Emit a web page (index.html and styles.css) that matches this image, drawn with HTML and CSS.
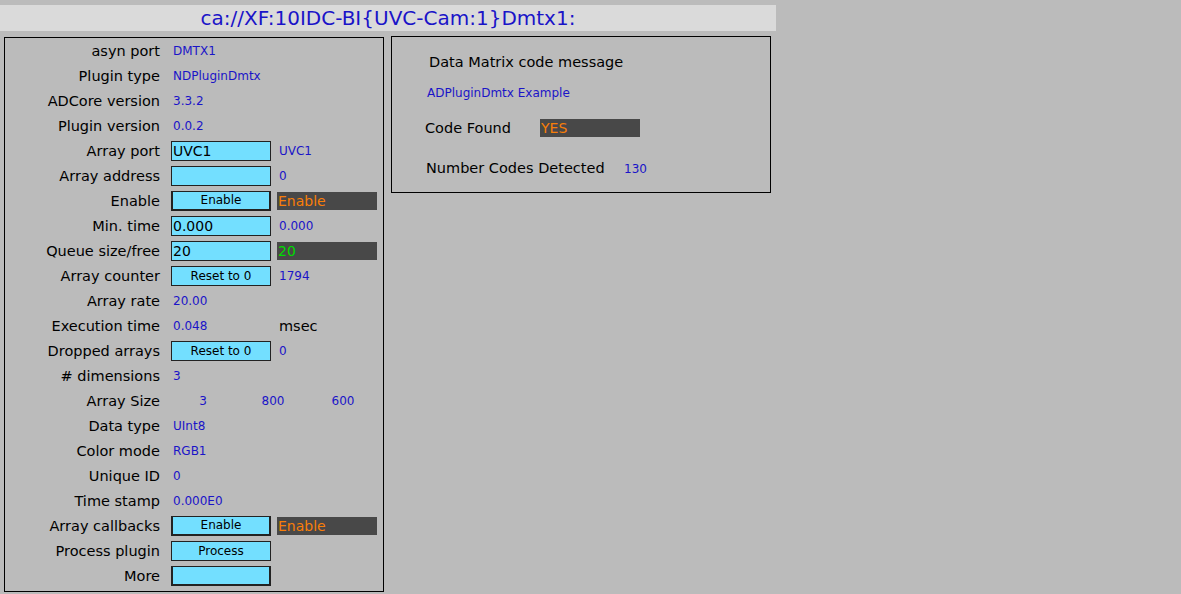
FILE: index.html
```html
<!DOCTYPE html>
<html>
<head>
<meta charset="utf-8">
<link rel="stylesheet" href="styles.css">
</head>
<body>
<div class="title">ca://XF:10IDC-BI{UVC-Cam:1}Dmtx1:</div>
<div class="main">
  <div class="panel left">
    <div class="row"><span class="lbl">asyn port</span><span class="w val">DMTX1</span></div>
    <div class="row"><span class="lbl">Plugin type</span><span class="w val">NDPluginDmtx</span></div>
    <div class="row"><span class="lbl">ADCore version</span><span class="w val">3.3.2</span></div>
    <div class="row"><span class="lbl">Plugin version</span><span class="w val">0.0.2</span></div>
    <div class="row"><span class="lbl">Array port</span><span class="w entry">UVC1</span><span class="r val">UVC1</span></div>
    <div class="row"><span class="lbl">Array address</span><span class="w entry"></span><span class="r val">0</span></div>
    <div class="row"><span class="lbl">Enable</span><span class="w btn thick">Enable</span><span class="r dark orange">Enable</span></div>
    <div class="row"><span class="lbl">Min. time</span><span class="w entry">0.000</span><span class="r val">0.000</span></div>
    <div class="row"><span class="lbl">Queue size/free</span><span class="w entry">20</span><span class="r dark green">20</span></div>
    <div class="row"><span class="lbl">Array counter</span><span class="w btn">Reset to 0</span><span class="r val">1794</span></div>
    <div class="row"><span class="lbl">Array rate</span><span class="w val">20.00</span></div>
    <div class="row"><span class="lbl">Execution time</span><span class="w val">0.048</span><span class="r unit">msec</span></div>
    <div class="row"><span class="lbl">Dropped arrays</span><span class="w btn">Reset to 0</span><span class="r val">0</span></div>
    <div class="row"><span class="lbl"># dimensions</span><span class="w val">3</span></div>
    <div class="row"><span class="lbl">Array Size</span><span class="sizes"><span class="cell">3</span><span class="cell">800</span><span class="cell">600</span></span></div>
    <div class="row"><span class="lbl">Data type</span><span class="w val">UInt8</span></div>
    <div class="row"><span class="lbl">Color mode</span><span class="w val">RGB1</span></div>
    <div class="row"><span class="lbl">Unique ID</span><span class="w val">0</span></div>
    <div class="row"><span class="lbl">Time stamp</span><span class="w val">0.000E0</span></div>
    <div class="row"><span class="lbl">Array callbacks</span><span class="w btn thick">Enable</span><span class="r dark orange">Enable</span></div>
    <div class="row"><span class="lbl">Process plugin</span><span class="w btn">Process</span></div>
    <div class="row"><span class="lbl">More</span><span class="w btn thick menu"></span></div>
  </div>
  <div class="panel right">
    <div class="heading">Data Matrix code message</div>
    <div class="message">ADPluginDmtx Example</div>
    <div class="found"><span class="flbl">Code Found</span><span class="dark orange yes">YES</span></div>
    <div class="count"><span class="clbl">Number Codes Detected</span><span class="cval">130</span></div>
  </div>
</div>
</body>
</html>
```
FILE: styles.css
```css
html, body {
  margin: 0;
  padding: 0;
  background: #bbbbbb;
  font-family: "DejaVu Sans", "Liberation Sans", sans-serif;
  color: #000;
}
.title {
  width: 776px;
  height: 26px;
  margin-top: 5px;
  background: #dadada;
  color: #1a14c8;
  font-size: 20px;
  line-height: 26px;
  text-align: center;
}
.main {
  display: flex;
  align-items: flex-start;
  margin-top: 6px;
  padding-left: 4px;
  gap: 7px;
}
.panel {
  box-sizing: border-box;
  border: 1px solid #000;
}
.left {
  width: 380px;
  height: 555px;
  padding-top: 0;
  display: flex;
  flex-direction: column;
}
.row {
  height: 25px;
  display: flex;
  align-items: center;
}
.lbl {
  width: 155px;
  margin-right: 11px;
  text-align: right;
  font-size: 14.5px;
  white-space: nowrap;
}
.w {
  box-sizing: border-box;
  width: 100px;
}
.r {
  box-sizing: border-box;
  width: 100px;
  margin-left: 6px;
}
.val {
  color: #1a14c8;
  font-size: 12px;
  padding-left: 2px;
  white-space: nowrap;
}
.unit {
  font-size: 14.5px;
  padding-left: 2px;
}
.entry {
  height: 20px;
  background: #73dfff;
  border: 1px solid #222;
  font-size: 14px;
  line-height: 18px;
  padding-left: 1px;
}
.btn {
  height: 20px;
  background: #73dfff;
  border: 1px solid #222;
  font-size: 12px;
  line-height: 18px;
  text-align: center;
}
.btn.thick {
  border-width: 1px 2px 2px 2px;
  line-height: 17px;
}
.dark {
  box-sizing: border-box;
  height: 18px;
  background: #484848;
  font-size: 14px;
  line-height: 18px;
  padding-left: 1px;
}
.orange { color: #f87e08; }
.green { color: #00dc00; }
.sizes {
  display: flex;
  gap: 10px;
  padding-left: 2px;
}
.cell {
  width: 60px;
  text-align: center;
  color: #1a14c8;
  font-size: 12px;
}
.right {
  width: 380px;
  height: 157px;
  margin-top: -1px;
}
.heading {
  font-size: 14.5px;
  height: 20px;
  line-height: 20px;
  margin: 15px 0 0 37px;
}
.message {
  color: #1a14c8;
  font-size: 12px;
  height: 16px;
  line-height: 16px;
  margin: 13px 0 0 35px;
}
.found {
  display: flex;
  align-items: center;
  height: 18px;
  margin: 18px 0 0 33px;
}
.flbl {
  width: 115px;
  font-size: 14.5px;
}
.yes {
  width: 100px;
}
.count {
  display: flex;
  align-items: center;
  height: 20px;
  margin: 21px 0 0 34px;
}
.clbl {
  width: 198px;
  font-size: 14.5px;
}
.cval {
  color: #1a14c8;
  font-size: 12px;
  padding-top: 2px;
}
```
